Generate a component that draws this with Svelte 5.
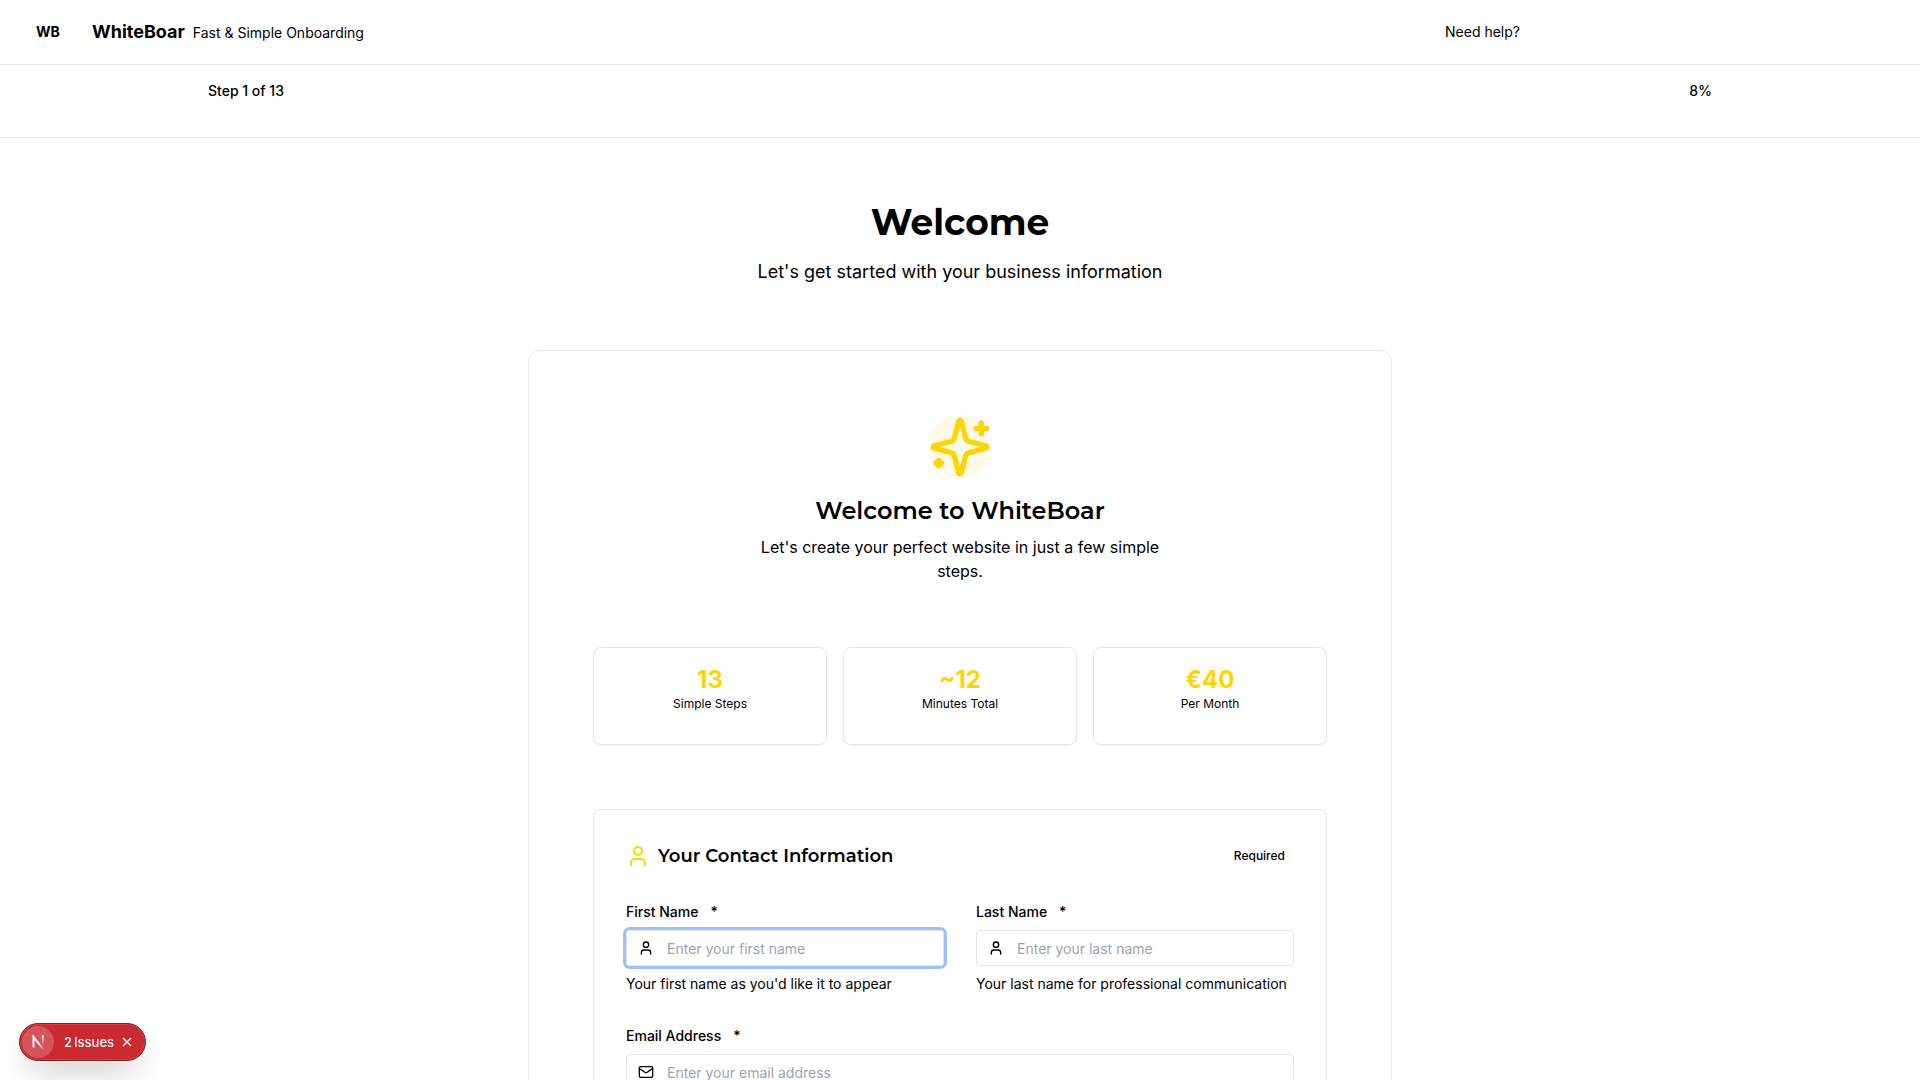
<script>
  const stats = [
    { value: '13', label: 'Simple Steps' },
    { value: '~12', label: 'Minutes Total' },
    { value: '€40', label: 'Per Month' }
  ];
  const fields = [
    { id: 'first-name', label: 'First Name', icon: 'user', type: 'text', placeholder: 'Enter your first name', hint: "Your first name as you'd like it to appear", active: true },
    { id: 'last-name', label: 'Last Name', icon: 'user', type: 'text', placeholder: 'Enter your last name', hint: 'Your last name for professional communication' },
    { id: 'email', label: 'Email Address', icon: 'mail', type: 'email', placeholder: 'Enter your email address', wide: true }
  ];
</script>

{#snippet icon(name)}
  <svg class="icon" viewBox="0 0 24 24" aria-hidden="true">
    {#if name === 'user'}
      <path d="M19 21v-2a4 4 0 0 0-4-4H9a4 4 0 0 0-4 4v2" />
      <circle cx="12" cy="7" r="4" />
    {:else if name === 'mail'}
      <rect x="2" y="4" width="20" height="16" rx="2" />
      <path d="m22 7-8.97 5.7a1.94 1.94 0 0 1-2.06 0L2 7" />
    {:else if name === 'sparkles'}
      <path d="M9.937 15.5A2 2 0 0 0 8.5 14.063l-6.135-1.582a.5.5 0 0 1 0-.962L8.5 9.936A2 2 0 0 0 9.937 8.5l1.582-6.135a.5.5 0 0 1 .963 0L14.063 8.5A2 2 0 0 0 15.5 9.937l6.135 1.581a.5.5 0 0 1 0 .964L15.5 14.063a2 2 0 0 0-1.437 1.437l-1.582 6.135a.5.5 0 0 1-.963 0z" />
      <path d="M20 3v4M22 5h-4M4 17v2M5 18H3" />
    {/if}
  </svg>
{/snippet}

<div class="page">
  <header class="topbar">
    <div class="brand">
      <span class="logo">WB</span>
      <div class="brand-text">
        <span class="name">WhiteBoar</span>
        <span>Fast &amp; Simple Onboarding</span>
      </div>
    </div>
    <a href="#help">Need help?</a>
  </header>

  <div class="progress">
    <div class="progress-inner">
      <span>Step 1 of 13</span>
      <span>8%</span>
    </div>
  </div>

  <main>
    <h1>Welcome</h1>
    <p class="lead">Let's get started with your business information</p>

    <section class="card">
      <div class="intro">
        <div class="spark">{@render icon('sparkles')}</div>
        <h2>Welcome to WhiteBoar</h2>
        <p>Let's create your perfect website in just a few simple steps.</p>
      </div>

      <div class="stats">
        {#each stats as s}
          <div class="stat">
            <strong>{s.value}</strong>
            <span>{s.label}</span>
          </div>
        {/each}
      </div>

      <form class="contact">
        <div class="contact-head">
          <span class="head-icon">{@render icon('user')}</span>
          <h3>Your Contact Information</h3>
          <span class="required">Required</span>
        </div>
        <div class="fields">
          {#each fields as f}
            <div class="field" class:wide={f.wide}>
              <label for={f.id}>{f.label}<span>*</span></label>
              <div class="control" class:active={f.active}>
                {@render icon(f.icon)}
                <input id={f.id} type={f.type} placeholder={f.placeholder} required />
              </div>
              {#if f.hint}<p>{f.hint}</p>{/if}
            </div>
          {/each}
        </div>
      </form>
    </section>
  </main>

  <div class="issues">
    <span class="n-mark">
      <svg viewBox="0 0 32 32" aria-hidden="true">
        <defs>
          <linearGradient id="diag" x1="17" y1="17" x2="22" y2="23" gradientUnits="userSpaceOnUse">
            <stop stop-color="#fff" />
            <stop offset="1" stop-color="#fff" stop-opacity="0.1" />
          </linearGradient>
          <linearGradient id="stem" x1="21" y1="10" x2="21" y2="19" gradientUnits="userSpaceOnUse">
            <stop stop-color="#fff" />
            <stop offset="1" stop-color="#fff" stop-opacity="0" />
          </linearGradient>
        </defs>
        <path d="M11.5 21.5V11L21.5 23.5" stroke="url(#diag)" stroke-width="1.9" fill="none" />
        <path d="M20.8 10h.01v9h-.01z" stroke="url(#stem)" stroke-width="1.7" />
      </svg>
    </span>
    <button class="count" type="button"><span>2</span><span>Issues</span></button>
    <button class="close" type="button" aria-label="Dismiss">
      <svg viewBox="0 0 14 14" aria-hidden="true"><path d="M3 3l8 8M11 3l-8 8" /></svg>
    </button>
  </div>
</div>

<style>
  :global(body) {
    margin: 0;
    background: #fff;
  }
  .page, .page * {
    box-sizing: border-box;
  }
  .page {
    height: 100vh;
    overflow-y: auto;
    scrollbar-width: none;
    font-family: Inter, "Liberation Sans", sans-serif;
    font-size: 14px;
    line-height: 20px;
    color: #000;
  }
  h1, h2, h3, p {
    margin: 0;
  }
  h1, h2, h3 {
    font-family: Montserrat, Inter, sans-serif;
  }
  .icon {
    display: block;
    fill: none;
    stroke: currentColor;
    stroke-width: 2;
    stroke-linecap: round;
    stroke-linejoin: round;
  }
  .topbar {
    display: flex;
    align-items: center;
    justify-content: space-between;
    height: 65px;
    padding: 0 400px 0 32px;
    border-bottom: 1px solid #e5e7eb;
  }
  .topbar a {
    color: inherit;
    text-decoration: none;
  }
  .brand {
    display: flex;
    align-items: center;
    gap: 28px;
  }
  .logo {
    width: 32px;
    text-align: center;
    font-weight: 700;
  }
  .brand-text {
    display: flex;
    align-items: baseline;
    gap: 8px;
  }
  .name {
    font-size: 18px;
    line-height: 28px;
    font-weight: 700;
  }
  .progress {
    height: 73px;
    padding-top: 16px;
    border-bottom: 1px solid #e5e7eb;
    font-weight: 500;
  }
  .progress-inner {
    display: flex;
    justify-content: space-between;
    max-width: 1536px;
    margin: 0 auto;
    padding: 0 16px;
  }
  main {
    max-width: 896px;
    margin: 0 auto;
    padding: 64px 16px;
    text-align: center;
  }
  h1 {
    font-size: 36px;
    line-height: 40px;
    font-weight: 700;
  }
  .lead {
    margin-top: 16px;
    font-size: 18px;
    line-height: 28px;
  }
  .card {
    margin-top: 64px;
    padding: 64px;
    border: 1px solid #e5e7eb;
    border-radius: 12px;
  }
  .spark {
    width: 64px;
    height: 64px;
    margin: 0 auto;
    border-radius: 50%;
    background: #fffbe6;
    color: #ffd400;
  }
  .intro h2 {
    margin-top: 16px;
    font-size: 24px;
    line-height: 32px;
    font-weight: 600;
  }
  .intro p {
    max-width: 440px;
    margin: 8px auto 0;
    font-size: 16px;
    line-height: 24px;
  }
  .stats {
    display: grid;
    grid-template-columns: repeat(3, 1fr);
    gap: 16px;
    margin: 64px 0;
  }
  .stat {
    display: flex;
    flex-direction: column;
    padding: 16px 16px 32px;
    border: 1px solid #e5e5e5;
    border-radius: 8px;
    box-shadow: 0 1px 2px rgba(0, 0, 0, 0.05);
  }
  .stat strong {
    font-size: 24px;
    line-height: 32px;
    font-weight: 700;
    color: #ffd400;
  }
  .stat span {
    font-size: 12px;
    line-height: 16px;
  }
  .contact {
    padding: 32px;
    border: 1px solid #e5e5e5;
    border-radius: 8px;
    text-align: left;
  }
  .contact-head {
    display: flex;
    align-items: center;
    gap: 8px;
    height: 28px;
  }
  .head-icon {
    width: 24px;
    color: #ffd400;
  }
  h3 {
    font-size: 18px;
    line-height: 28px;
    font-weight: 600;
  }
  .required {
    margin-left: auto;
    padding: 0 9px;
    font-size: 12px;
    line-height: 16px;
    font-weight: 500;
  }
  .fields {
    display: grid;
    grid-template-columns: 1fr 1fr;
    gap: 32px;
    margin-top: 32px;
  }
  .field {
    display: grid;
    gap: 8px;
  }
  .wide {
    grid-column: 1 / -1;
  }
  label {
    display: flex;
    gap: 12px;
    font-weight: 500;
  }
  .control {
    display: flex;
    align-items: center;
    gap: 13px;
    height: 36px;
    padding: 0 11px;
    border: 1px solid #e5e5e5;
    border-radius: 4px;
  }
  .control.active {
    box-shadow: 0 0 0 3px #9dbffb;
  }
  .control .icon {
    flex: none;
    width: 16px;
    height: 16px;
  }
  .control input {
    flex: 1;
    min-width: 0;
    padding: 2px 0 0;
    border: 0;
    outline: 0;
    background: none;
    font: inherit;
    color: inherit;
  }
  .control input::placeholder {
    color: #9ca3af;
    opacity: 1;
  }
  .issues {
    position: fixed;
    left: 19px;
    bottom: 19px;
    display: flex;
    align-items: center;
    height: 38px;
    padding: 0 11px 0 2px;
    border: 1px solid #6b2c30;
    border-radius: 19px;
    background: #ca2a30;
    color: #fff;
    box-shadow: inset 0 0 0 1px #d93a41, 0 16px 32px -8px rgba(0, 0, 0, 0.24);
  }
  .n-mark {
    width: 32px;
    height: 32px;
    border-radius: 50%;
    background: #d5555a;
  }
  .n-mark svg {
    display: block;
  }
  .issues button {
    padding: 0;
    border: 0;
    background: none;
    color: inherit;
    font: inherit;
  }
  .issues .count {
    display: flex;
    gap: 2px;
    margin: 0 6px 0 10px;
    font-size: 13px;
    font-weight: 500;
  }
  .close svg {
    display: block;
    width: 14px;
    height: 14px;
    stroke: #fff;
    stroke-width: 1.3;
  }
</style>
